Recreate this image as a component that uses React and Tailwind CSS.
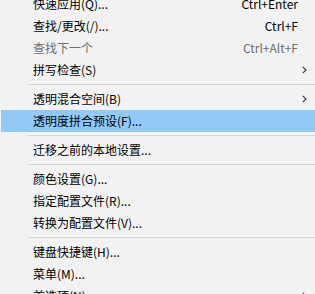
import React from 'react';

const items = [
    { label: '快速应用(Q)...', shortcut: 'Ctrl+Enter' },
    { label: '查找/更改(/)...', shortcut: 'Ctrl+F' },
    { label: '查找下一个', shortcut: 'Ctrl+Alt+F', disabled: true },
    { label: '拼写检查(S)', submenu: true },
    { separator: true },
    { label: '透明混合空间(B)', submenu: true },
    { label: '透明度拼合预设(F)...', active: true },
    { separator: true },
    { label: '迁移之前的本地设置...' },
    { separator: true },
    { label: '颜色设置(G)...' },
    { label: '指定配置文件(R)...' },
    { label: '转换为配置文件(V)...' },
    { separator: true },
    { label: '键盘快捷键(H)...' },
    { label: '菜单(M)...' },
    { label: '首选项(N)', submenu: true },
];

const Chevron = () => (
    <svg width="5" height="8" viewBox="0 0 5 8" className="block">
        <path d="M0.8 0.8 L4 4 L0.8 7.2" fill="none" stroke="#333" strokeWidth="1.1" />
    </svg>
);

const MenuRow = ({ item }) => {
    if (item.separator) {
        return (
            <div className="h-[7px] flex items-center pl-[28px]">
                <div className="h-px w-full bg-[#d7d7d7]" />
            </div>
        );
    }
    return (
        <div
            className={`h-[22px] flex items-center ml-px pl-[32px] pr-[8px] ${item.active ? 'bg-[#91c9f7]' : ''} ${item.disabled ? 'text-[#6d6d6d]' : 'text-black'}`}
        >
            <span className="flex-1 whitespace-nowrap">{item.label}</span>
            {item.shortcut && <span className="mr-[9px] whitespace-nowrap">{item.shortcut}</span>}
            {item.submenu && <Chevron />}
        </div>
    );
};

export default function App() {
    return (
        <div
            className="w-[315px] h-[294px] overflow-hidden bg-[#f2f2f2] text-[12px] leading-none"
            style={{ fontFamily: '"Noto Sans CJK SC", "Noto Sans", sans-serif' }}
        >
            <div className="-mt-[7px]">
                {items.map((item, i) => (
                    <MenuRow key={i} item={item} />
                ))}
            </div>
        </div>
    );
}
